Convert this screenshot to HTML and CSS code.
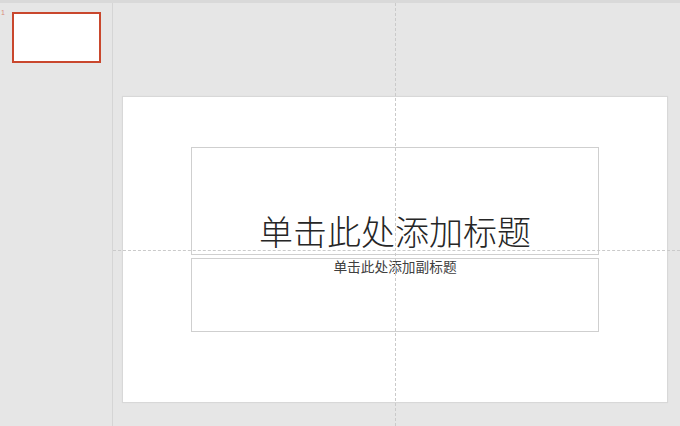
FILE: index.html
```html
<!DOCTYPE html>
<html lang="zh-CN">
<head>
<meta charset="utf-8">
<link rel="stylesheet" href="styles.css">
</head>
<body>
<div class="topbar"></div>
<div class="app">
  <aside class="sidebar">
    <div class="thumb-row">
      <span class="thumb-num">1</span>
      <div class="thumb"></div>
    </div>
  </aside>
  <main class="canvas">
    <div class="slide">
      <div class="ph ph-title"><span>单击此处添加标题</span></div>
      <div class="ph ph-sub"><span>单击此处添加副标题</span></div>
    </div>
    <div class="guide guide-v"></div>
    <div class="guide guide-h"></div>
  </main>
</div>
</body>
</html>
```

FILE: styles.css
```css
html, body {
  margin: 0;
  padding: 0;
  width: 680px;
  height: 426px;
  overflow: hidden;
  background: #e6e6e6;
  font-family: "Noto Sans CJK SC", "Noto Sans", sans-serif;
}
.topbar {
  height: 3px;
  background: #d9d9d9;
}
.app {
  display: flex;
  height: 423px;
}
.sidebar {
  width: 112px;
  flex: none;
  border-right: 1px solid #d5d5d5;
  background: #e6e6e6;
}
.thumb-row {
  display: flex;
  align-items: flex-start;
  padding-top: 9px;
}
.thumb-num {
  width: 12px;
  margin-top: -3px;
  padding-left: 1px;
  box-sizing: border-box;
  font-family: "Liberation Sans", sans-serif;
  font-size: 7px;
  line-height: 8px;
  color: #d98a7c;
}
.thumb {
  width: 85px;
  height: 47px;
  border: 2px solid #c9472d;
  background: #ffffff;
}
.canvas {
  position: relative;
  flex: 1;
  background: #e6e6e6;
}
.slide {
  margin: 94px 0 0 10px;
  width: 544px;
  height: 305px;
  background: #ffffff;
  box-shadow: 0 0 1px 1px rgba(0, 0, 0, 0.06);
  display: flex;
  flex-direction: column;
  align-items: center;
  padding-top: 50px;
  box-sizing: border-box;
  gap: 3px;
}
.ph {
  width: 408px;
  box-sizing: border-box;
  border: 1px solid #cfcfcf;
  display: flex;
  justify-content: center;
  color: #262626;
}
.ph-title {
  height: 108px;
  align-items: flex-end;
  padding-bottom: 3px;
  font-size: 34px;
  font-weight: 300;
  line-height: 40px;
}
.ph-sub {
  height: 74px;
  align-items: flex-start;
  padding-top: 0;
  font-size: 13.7px;
  line-height: 14px;
  color: #404040;
}
.guide {
  position: absolute;
  pointer-events: none;
}
.guide-v {
  left: 282px;
  top: 0;
  bottom: 0;
  border-left: 1px dashed #cacaca;
}
.guide-h {
  left: 0;
  right: 0;
  top: 247px;
  border-top: 1px dashed #cacaca;
}
```
